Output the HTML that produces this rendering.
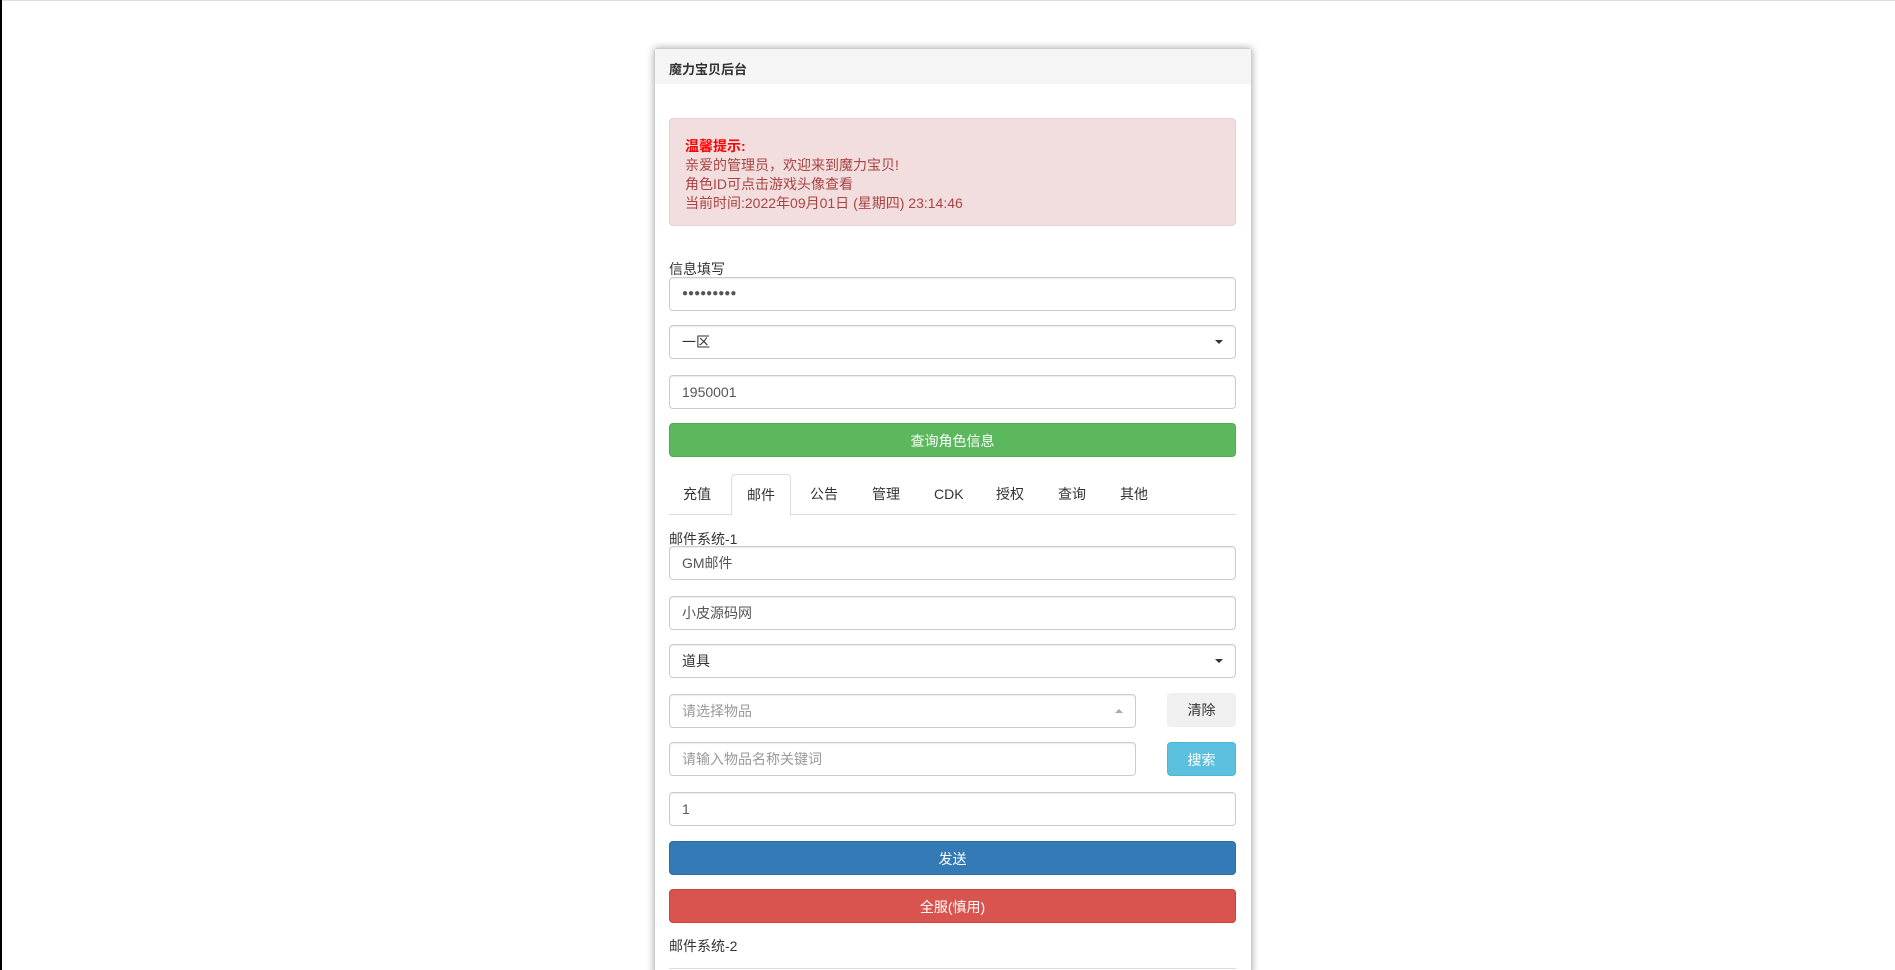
<!DOCTYPE html>
<html><head><meta charset="utf-8"><style>
*{box-sizing:border-box;margin:0;padding:0}
html,body{width:1895px;height:970px;overflow:hidden}
body{background:#fff;font-family:"Liberation Sans","Noto Sans CJK SC",sans-serif;font-size:14px;color:#333;position:relative}
.topline{position:absolute;left:0;top:0;width:1895px;height:1px;background:#ddd}
.lstrip{position:absolute;left:0;top:0;width:2px;height:970px;background:#000}
.panel{position:absolute;left:654px;top:48px;width:598px;height:930px;border:1px solid #ccc;border-radius:4px;box-shadow:0 0 8px rgba(0,0,0,.35);background:#fff}
.hd{position:absolute;left:0;top:0;right:0;height:35px;background:#f5f5f5;padding:10px 14px;font-weight:bold;font-size:13px}
.a{position:absolute}
.alert{left:669px;top:118px;width:567px;height:108px;background:#f2dede;border:1px solid #ebccd1;border-radius:4px;color:#a94442;padding:18px 15px;line-height:19px;font-size:14px}
.alert b{color:#f00}
.lbl{font-size:14px;color:#333}
.in{left:669px;width:567px;height:34px;border:1px solid #ccc;border-radius:4px;padding:0 12px;line-height:32px;color:#555;font-size:14px;box-shadow:inset 0 1px 1px rgba(0,0,0,.075)}
.ph{color:#999}
.caret{position:absolute;right:12px;top:14px;border-left:4px solid transparent;border-right:4px solid transparent;border-top:4px solid #333}
.up{position:absolute;right:12px;top:14px;border-left:4px solid transparent;border-right:4px solid transparent;border-bottom:4px solid #aaa}
.btn{left:669px;width:567px;height:34px;border-radius:4px;color:#fff;text-align:center;line-height:34px;font-size:14px}
.tabs{left:669px;top:474px;width:567px;height:41px;border-bottom:1px solid #ddd}
.tab{position:absolute;top:0;height:41px;line-height:41px;font-size:14px;color:#333}
.act{border:1px solid #ddd;border-bottom-color:#fff;border-radius:4px 4px 0 0;background:#fff;height:42px;text-align:center;width:60px}
</style></head><body>
<div class="topline"></div><div class="lstrip"></div>
<div class="panel"><div class="hd">魔力宝贝后台</div></div>
<div class="a alert"><b>温馨提示:</b><br>亲爱的管理员，欢迎来到魔力宝贝!<br>角色ID可点击游戏头像查看<br>当前时间:2022年09月01日 (星期四) 23:14:46</div>
<div class="a lbl" style="left:669px;top:259px">信息填写</div>
<div class="a in" style="top:277px;font-size:10px;letter-spacing:0">●●●●●●●●●</div>
<div class="a in" style="top:325px;color:#333">一区<span class="caret"></span></div>
<div class="a in" style="top:375px">1950001</div>
<div class="a btn" style="top:423px;background:#5cb85c;border:1px solid #4cae4c">查询角色信息</div>
<div class="a tabs">
<div class="tab" style="left:14px">充值</div>
<div class="tab act" style="left:62px">邮件</div>
<div class="tab" style="left:141px">公告</div>
<div class="tab" style="left:203px">管理</div>
<div class="tab" style="left:265px">CDK</div>
<div class="tab" style="left:327px">授权</div>
<div class="tab" style="left:389px">查询</div>
<div class="tab" style="left:451px">其他</div>
</div>
<div class="a lbl" style="left:669px;top:529px">邮件系统-1</div>
<div class="a in" style="top:546px">GM邮件</div>
<div class="a in" style="top:596px">小皮源码网</div>
<div class="a in" style="top:644px;color:#333">道具<span class="caret"></span></div>
<div class="a in ph" style="top:694px;width:467px">请选择物品<span class="up"></span></div>
<div class="a btn" style="left:1167px;top:693px;width:69px;background:#f0f0f0;color:#333">清除</div>
<div class="a in ph" style="top:742px;width:467px">请输入物品名称关键词</div>
<div class="a btn" style="left:1167px;top:742px;width:69px;background:#5bc0de;border:1px solid #46b8da">搜索</div>
<div class="a in" style="top:792px">1</div>
<div class="a btn" style="top:841px;background:#337ab7;border:1px solid #2e6da4">发送</div>
<div class="a btn" style="top:889px;background:#d9534f;border:1px solid #d43f3a">全服(慎用)</div>
<div class="a lbl" style="left:669px;top:936px">邮件系统-2</div>
<div class="a" style="left:669px;top:968px;width:567px;height:2px;border-top:1px solid #ddd"></div>
</body></html>
